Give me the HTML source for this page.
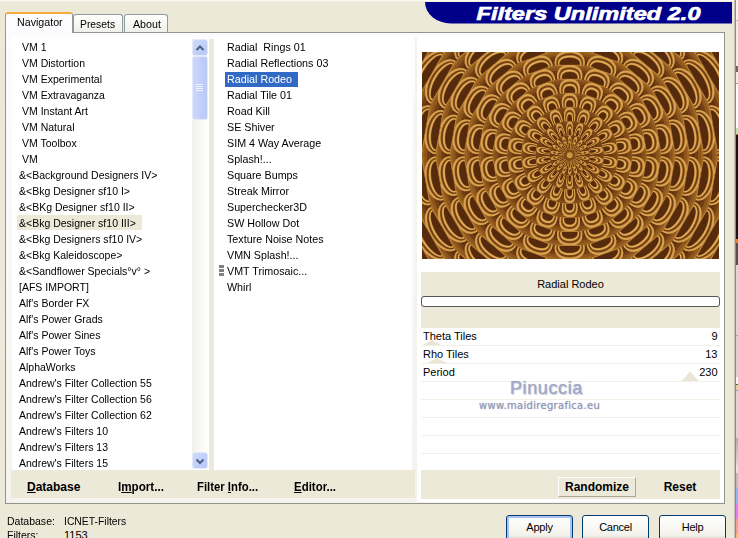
<!DOCTYPE html>
<html><head><meta charset="utf-8"><title>Filters Unlimited 2.0</title>
<style>
html,body{margin:0;padding:0;}
body{width:738px;height:538px;overflow:hidden;background:#ECE9D8;position:relative;font-family:"Liberation Sans",sans-serif;font-size:11px;color:#000;}
.a{position:absolute;}
.t{position:absolute;white-space:nowrap;line-height:14px;height:14px;}
.l{transform:scaleX(0.955);transform-origin:0 0;}
.m{transform:scaleX(0.975);transform-origin:0 0;}
.b{font-weight:bold;font-size:12px;}
.btn{position:absolute;box-sizing:border-box;border:1px solid #003C74;border-radius:3px;background:linear-gradient(#fff,#F3F2EA 80%,#D8D4C4);height:26px;text-align:center;line-height:22px;font-size:11px;letter-spacing:-0.25px;}
u{text-decoration:underline;}
</style></head><body>

<div class="a" style="left:0;top:0;width:738px;height:1px;background:#FAF9F2"></div><div class="a" style="left:0;top:1px;width:738px;height:1px;background:#F1EEE0"></div>
<svg class="a" style="left:420px;top:0px" width="312" height="26" viewBox="420 0 312 26"><path d="M425,2 A26,21.5 0 0 0 451,23.5 H732 V2 Z" fill="#00008B"/><text x="588.5" y="19.5" text-anchor="middle" font-family="Liberation Sans, sans-serif" font-weight="bold" font-style="italic" font-size="19" fill="#fff" stroke="#fff" stroke-width="0.7" textLength="224" lengthAdjust="spacingAndGlyphs">Filters Unlimited 2.0</text></svg>
<div class="a" style="left:5px;top:32px;width:720px;height:472px;box-sizing:border-box;border:1px solid #94948E;background:linear-gradient(#FCFCFE,#F4F3EE)"></div>
<div class="a" style="left:72.5px;top:14px;width:50px;height:18px;box-sizing:border-box;border:1px solid #919B9C;border-bottom:none;border-radius:3px 3px 0 0;background:linear-gradient(#fff,#F0F0EA)"></div>
<div class="a" style="left:124px;top:14px;width:44px;height:18px;box-sizing:border-box;border:1px solid #919B9C;border-bottom:none;border-radius:3px 3px 0 0;background:linear-gradient(#fff,#F0F0EA)"></div>
<div class="a" style="left:5px;top:12px;width:68px;height:21px;box-sizing:border-box;border:1px solid #919B9C;border-bottom:none;border-top:2px solid #F2AD3C;border-radius:3px 3px 0 0;background:#FCFCFE"></div>
<div class="t" style="left:16.5px;top:15px;font-size:11px;transform:scaleX(0.97);transform-origin:0 0">Navigator</div>
<div class="t" style="left:80px;top:17px;font-size:11px;transform:scaleX(0.94);transform-origin:0 0">Presets</div>
<div class="t" style="left:132.5px;top:17px;font-size:11px;transform:scaleX(0.97);transform-origin:0 0">About</div>
<div class="a" style="left:12px;top:37px;width:197px;height:433px;background:#fff"></div>
<div class="a" style="left:209px;top:39px;width:5px;height:431px;background:#ECE9D8"></div>
<div class="a" style="left:214px;top:37px;width:198px;height:433px;background:#fff"></div>
<div class="a" style="left:17px;top:215px;width:125px;height:15px;background:#ECE9D8"></div>
<div class="a" style="left:225px;top:71.5px;width:73px;height:15px;background:#316AC5"></div>
<div class="t l" style="left:22px;top:39.5px">VM 1</div>
<div class="t l" style="left:22px;top:55.5px">VM Distortion</div>
<div class="t l" style="left:22px;top:71.5px">VM Experimental</div>
<div class="t l" style="left:22px;top:87.5px">VM Extravaganza</div>
<div class="t l" style="left:22px;top:103.5px">VM Instant Art</div>
<div class="t l" style="left:22px;top:119.5px">VM Natural</div>
<div class="t l" style="left:22px;top:135.5px">VM Toolbox</div>
<div class="t l" style="left:22px;top:151.5px">VM</div>
<div class="t l" style="left:19px;top:167.5px">&amp;&lt;Background Designers IV&gt;</div>
<div class="t l" style="left:19px;top:183.5px">&amp;&lt;Bkg Designer sf10 I&gt;</div>
<div class="t l" style="left:19px;top:199.5px">&amp;&lt;BKg Designer sf10 II&gt;</div>
<div class="t l" style="left:19px;top:215.5px">&amp;&lt;Bkg Designer sf10 III&gt;</div>
<div class="t l" style="left:19px;top:231.5px">&amp;&lt;Bkg Designers sf10 IV&gt;</div>
<div class="t l" style="left:19px;top:247.5px">&amp;&lt;Bkg Kaleidoscope&gt;</div>
<div class="t l" style="left:19px;top:263.5px">&amp;&lt;Sandflower Specials°v° &gt;</div>
<div class="t l" style="left:19px;top:279.5px">[AFS IMPORT]</div>
<div class="t l" style="left:19px;top:295.5px">Alf's Border FX</div>
<div class="t l" style="left:19px;top:311.5px">Alf's Power Grads</div>
<div class="t l" style="left:19px;top:327.5px">Alf's Power Sines</div>
<div class="t l" style="left:19px;top:343.5px">Alf's Power Toys</div>
<div class="t l" style="left:19px;top:359.5px">AlphaWorks</div>
<div class="t l" style="left:19px;top:375.5px">Andrew's Filter Collection 55</div>
<div class="t l" style="left:19px;top:391.5px">Andrew's Filter Collection 56</div>
<div class="t l" style="left:19px;top:407.5px">Andrew's Filter Collection 62</div>
<div class="t l" style="left:19px;top:423.5px">Andrew's Filters 10</div>
<div class="t l" style="left:19px;top:439.5px">Andrew's Filters 13</div>
<div class="t l" style="left:19px;top:455.5px">Andrew's Filters 15</div>
<div class="t m" style="left:227px;top:39.5px">Radial&nbsp; Rings 01</div>
<div class="t m" style="left:227px;top:55.5px">Radial Reflections 03</div>
<div class="t m" style="left:227px;top:71.5px;color:#fff">Radial Rodeo</div>
<div class="t m" style="left:227px;top:87.5px">Radial Tile 01</div>
<div class="t m" style="left:227px;top:103.5px">Road Kill</div>
<div class="t m" style="left:227px;top:119.5px">SE Shiver</div>
<div class="t m" style="left:227px;top:135.5px">SIM 4 Way Average</div>
<div class="t m" style="left:227px;top:151.5px">Splash!...</div>
<div class="t m" style="left:227px;top:167.5px">Square Bumps</div>
<div class="t m" style="left:227px;top:183.5px">Streak Mirror</div>
<div class="t m" style="left:227px;top:199.5px">Superchecker3D</div>
<div class="t m" style="left:227px;top:215.5px">SW Hollow Dot</div>
<div class="t m" style="left:227px;top:231.5px">Texture Noise Notes</div>
<div class="t m" style="left:227px;top:247.5px">VMN Splash!...</div>
<div class="t m" style="left:227px;top:263.5px">VMT Trimosaic...</div>
<div class="t m" style="left:227px;top:279.5px">Whirl</div>
<div class="a" style="left:219px;top:265px;width:5px;height:3px;background:#808080"></div><div class="a" style="left:219px;top:269px;width:5px;height:3px;background:#808080"></div><div class="a" style="left:219px;top:273px;width:5px;height:3px;background:#808080"></div>
<div class="a" style="left:192px;top:39px;width:16px;height:430px;background:linear-gradient(90deg,#F3F1EC,#FEFEFB)"></div>
<div class="a" style="left:192px;top:39px;width:16px;height:17px;box-sizing:border-box;border:1px solid #E4EAFD;border-radius:3px;background:linear-gradient(135deg,#CFDBFD,#B6C6F5)"></div>
<div class="a" style="left:192px;top:452px;width:16px;height:17px;box-sizing:border-box;border:1px solid #E4EAFD;border-radius:3px;background:linear-gradient(135deg,#CFDBFD,#B6C6F5)"></div>
<div class="a" style="left:192px;top:56px;width:16px;height:64px;box-sizing:border-box;border:1px solid #E4EAFD;border-radius:3px;background:linear-gradient(90deg,#CBD8FC,#B9C8F6)"></div>
<svg class="a" style="left:192px;top:39.5px" width="16" height="16"><path d="M4.5,10 L8,6.5 L11.5,10" fill="none" stroke="#4D6185" stroke-width="2"/></svg>
<svg class="a" style="left:192px;top:452.5px" width="16" height="16"><path d="M4.5,6.5 L8,10 L11.5,6.5" fill="none" stroke="#4D6185" stroke-width="2"/></svg>
<div class="a" style="left:196px;top:84px;width:7px;height:1px;background:#EEF4FE"></div><div class="a" style="left:196px;top:86px;width:7px;height:1px;background:#EEF4FE"></div><div class="a" style="left:196px;top:88px;width:7px;height:1px;background:#EEF4FE"></div><div class="a" style="left:196px;top:90px;width:7px;height:1px;background:#EEF4FE"></div>
<div class="a" style="left:11px;top:470px;width:404px;height:28px;background:#ECE9D8"></div>
<div class="t b" style="left:27px;top:480px"><u>D</u>atabase</div>
<div class="t b" style="left:117.5px;top:480px;transform:scaleX(0.97);transform-origin:0 0">I<u>m</u>port...</div>
<div class="t b" style="left:196.5px;top:480px;transform:scaleX(0.945);transform-origin:0 0">Filter <u>I</u>nfo...</div>
<div class="t b" style="left:293.5px;top:480px;transform:scaleX(0.955);transform-origin:0 0"><u>E</u>ditor...</div>
<div class="a" style="left:416px;top:37px;width:308px;height:465px;background:#fff"></div>
<div class="a" style="left:415px;top:37px;width:2px;height:465px;background:#F3F2EC"></div>
<div class="a" style="left:421px;top:272px;width:299px;height:227px;background:#ECE9D8"></div>
<svg class="a" style="left:422px;top:52px" width="297" height="207" viewBox="0 0 297 207"><defs><filter id="bl" x="0" y="0" width="1" height="1"><feGaussianBlur stdDeviation="0.45"/></filter><g id="w"><path fill="#582B0D" d="M6.0,-0.0L6.0,-0.3L6.0,-0.7L5.9,-1.0L5.8,-1.4L5.7,-1.7L5.6,-2.1L11.3,-4.1L11.5,-3.4L11.7,-2.8L11.8,-2.1L11.9,-1.4L12.0,-0.7L12.0,-0.0Z"/><path fill="#5F300F" d="M11.7,-0.0L11.7,-0.7L11.6,-1.4L11.5,-2.0L11.4,-2.7L11.2,-3.3L11.0,-4.0L14.2,-5.2L14.5,-4.3L14.7,-3.5L14.9,-2.6L15.0,-1.8L15.1,-0.9L15.1,-0.0Z"/><path fill="#693811" d="M14.8,-0.0L14.8,-0.9L14.7,-1.7L14.6,-2.6L14.4,-3.4L14.2,-4.2L13.9,-5.1L16.9,-6.1L17.2,-5.1L17.5,-4.1L17.7,-3.1L17.8,-2.1L17.9,-1.0L17.9,-0.0Z"/><path fill="#6F3E14" d="M17.6,-0.0L17.6,-1.0L17.5,-2.0L17.4,-3.1L17.2,-4.1L16.9,-5.1L16.6,-6.0L19.3,-7.0L19.6,-5.9L19.9,-4.7L20.2,-3.6L20.4,-2.4L20.5,-1.2L20.5,-0.0Z"/><path fill="#CD9644" d="M5.7,-1.8L9.2,-2.9L11.7,-3.6L13.8,-4.1L15.6,-4.4L17.1,-4.5L18.1,-4.3L18.9,-4.0L19.2,-3.4L19.1,-2.7L18.5,-2.1L17.6,-1.6L16.2,-1.2L14.4,-0.9L12.2,-0.6L9.6,-0.4L6.0,-0.3Z"/><path fill="#D9A553" d="M5.7,-1.8L9.1,-2.8L11.5,-3.5L13.6,-3.9L15.3,-4.2L16.7,-4.3L17.7,-4.2L18.4,-3.9L18.7,-3.3L18.6,-2.6L18.1,-2.1L17.1,-1.7L15.8,-1.3L14.1,-0.9L12.0,-0.7L9.5,-0.5L6.0,-0.3Z"/><path fill="#CD9644" d="M5.8,-1.7L8.8,-2.5L11.0,-3.1L12.8,-3.5L14.3,-3.8L15.6,-3.9L16.5,-3.8L17.1,-3.5L17.4,-3.1L17.3,-2.5L16.8,-2.1L16.0,-1.7L14.8,-1.4L13.2,-1.1L11.4,-0.8L9.1,-0.6L6.0,-0.4Z"/><path fill="#9E6524" d="M5.8,-1.6L8.6,-2.4L10.7,-3.0L12.4,-3.3L13.9,-3.6L15.1,-3.6L15.9,-3.6L16.5,-3.4L16.7,-3.0L16.7,-2.5L16.2,-2.1L15.4,-1.7L14.3,-1.4L12.8,-1.1L11.1,-0.9L9.0,-0.7L6.0,-0.4Z"/><path fill="#703D13" d="M5.8,-1.6L8.5,-2.4L10.5,-2.9L12.2,-3.2L13.6,-3.4L14.7,-3.5L15.5,-3.5L16.1,-3.3L16.3,-2.9L16.2,-2.4L15.8,-2.1L15.0,-1.7L13.9,-1.4L12.6,-1.2L10.9,-0.9L8.8,-0.7L6.0,-0.5Z"/><path fill="#9E6524" d="M5.8,-1.5L8.2,-2.1L9.9,-2.5L11.3,-2.8L12.5,-3.0L13.4,-3.0L14.1,-3.0L14.6,-2.9L14.8,-2.6L14.7,-2.3L14.3,-2.0L13.7,-1.7L12.7,-1.5L11.6,-1.3L10.1,-1.0L8.4,-0.8L6.0,-0.6Z"/><path fill="#CD9644" d="M5.8,-1.5L8.1,-2.0L9.7,-2.4L11.1,-2.7L12.2,-2.9L13.1,-2.9L13.8,-2.9L14.3,-2.8L14.4,-2.5L14.4,-2.2L14.0,-2.0L13.4,-1.7L12.5,-1.5L11.3,-1.3L10.0,-1.1L8.3,-0.9L6.0,-0.6Z"/><path fill="#E2B260" d="M5.8,-1.4L8.0,-2.0L9.5,-2.3L10.8,-2.6L11.9,-2.7L12.8,-2.8L13.4,-2.8L13.8,-2.7L14.0,-2.5L13.9,-2.2L13.6,-2.0L13.0,-1.7L12.1,-1.5L11.1,-1.3L9.8,-1.1L8.2,-0.9L6.0,-0.6Z"/><path fill="#CD9644" d="M5.8,-1.4L7.7,-1.8L9.1,-2.1L10.2,-2.3L11.1,-2.4L11.9,-2.5L12.4,-2.5L12.8,-2.4L12.9,-2.3L12.8,-2.1L12.5,-1.9L12.0,-1.7L11.3,-1.5L10.4,-1.3L9.2,-1.1L7.9,-1.0L6.0,-0.7Z"/><path fill="#965C1E" d="M5.9,-1.3L7.6,-1.7L8.8,-2.0L9.9,-2.2L10.8,-2.3L11.5,-2.4L12.0,-2.4L12.3,-2.3L12.4,-2.2L12.3,-2.0L12.1,-1.9L11.6,-1.7L10.9,-1.5L10.0,-1.3L9.0,-1.2L7.7,-1.0L6.0,-0.8Z"/><path fill="#56290C" d="M5.9,-1.3L7.5,-1.7L8.7,-1.9L9.7,-2.1L10.5,-2.2L11.2,-2.3L11.6,-2.3L11.9,-2.3L12.1,-2.1L12.0,-2.0L11.7,-1.8L11.3,-1.7L10.6,-1.5L9.8,-1.4L8.8,-1.2L7.6,-1.0L5.9,-0.8Z"/><path fill="#592B0D" d="M20.2,-0.0L20.2,-1.2L20.1,-2.3L19.9,-3.5L19.7,-4.7L19.4,-5.8L19.0,-6.9L24.6,-9.0L25.1,-7.5L25.5,-6.0L25.8,-4.5L26.0,-3.0L26.1,-1.5L26.2,-0.0Z"/><path fill="#62320F" d="M25.9,-0.0L25.8,-1.5L25.7,-3.0L25.5,-4.5L25.2,-6.0L24.8,-7.4L24.3,-8.9L27.5,-10.0L28.1,-8.4L28.5,-6.8L28.9,-5.1L29.1,-3.4L29.3,-1.7L29.3,-0.0Z"/><path fill="#6F3D13" d="M29.0,-0.0L29.0,-1.7L28.8,-3.4L28.6,-5.0L28.2,-6.7L27.8,-8.3L27.3,-9.9L30.2,-11.0L30.8,-9.2L31.3,-7.4L31.7,-5.6L31.9,-3.7L32.1,-1.9L32.1,-0.0Z"/><path fill="#774417" d="M31.8,-0.0L31.8,-1.9L31.6,-3.7L31.4,-5.5L31.0,-7.3L30.5,-9.1L29.9,-10.9L32.6,-11.9L33.2,-10.0L33.8,-8.0L34.2,-6.0L34.5,-4.0L34.6,-2.0L34.7,-0.0Z"/><path fill="#CD9644" d="M19.2,-6.2L22.7,-7.3L25.2,-7.9L27.4,-8.3L29.2,-8.4L30.8,-8.2L31.9,-7.8L32.7,-7.0L33.2,-5.9L33.2,-4.6L32.7,-3.6L31.7,-2.8L30.3,-2.1L28.6,-1.6L26.4,-1.2L23.8,-0.9L20.2,-0.7Z"/><path fill="#D9A553" d="M19.3,-6.1L22.6,-7.1L25.1,-7.7L27.1,-8.1L28.9,-8.1L30.4,-8.0L31.5,-7.6L32.3,-6.9L32.7,-5.8L32.7,-4.6L32.2,-3.7L31.3,-2.9L30.0,-2.2L28.3,-1.7L26.2,-1.3L23.7,-1.1L20.2,-0.9Z"/><path fill="#CD9644" d="M19.4,-5.8L22.4,-6.6L24.6,-7.2L26.4,-7.4L28.0,-7.5L29.3,-7.4L30.3,-7.0L31.0,-6.5L31.4,-5.5L31.3,-4.5L30.9,-3.8L30.1,-3.1L28.9,-2.5L27.4,-2.1L25.5,-1.7L23.3,-1.4L20.2,-1.2Z"/><path fill="#9E6524" d="M19.4,-5.6L22.3,-6.4L24.3,-6.9L26.1,-7.2L27.6,-7.2L28.8,-7.1L29.8,-6.8L30.4,-6.3L30.7,-5.4L30.7,-4.5L30.3,-3.8L29.5,-3.2L28.4,-2.6L27.0,-2.2L25.2,-1.9L23.1,-1.6L20.2,-1.3Z"/><path fill="#703D13" d="M19.4,-5.5L22.2,-6.3L24.2,-6.7L25.9,-7.0L27.3,-7.0L28.5,-6.9L29.4,-6.6L30.0,-6.2L30.3,-5.3L30.3,-4.5L29.9,-3.8L29.1,-3.2L28.1,-2.7L26.7,-2.3L25.0,-2.0L23.0,-1.7L20.1,-1.4Z"/><path fill="#9E6524" d="M19.5,-5.2L21.9,-5.8L23.6,-6.1L25.1,-6.3L26.3,-6.4L27.3,-6.3L28.0,-6.1L28.5,-5.7L28.8,-5.1L28.7,-4.4L28.4,-3.9L27.8,-3.4L26.9,-3.0L25.7,-2.6L24.3,-2.3L22.5,-2.1L20.1,-1.8Z"/><path fill="#CD9644" d="M19.6,-5.1L21.8,-5.6L23.5,-6.0L24.9,-6.2L26.0,-6.2L27.0,-6.2L27.7,-5.9L28.2,-5.6L28.4,-5.0L28.4,-4.4L28.1,-3.9L27.5,-3.4L26.6,-3.0L25.5,-2.7L24.1,-2.4L22.4,-2.2L20.1,-1.9Z"/><path fill="#E2B260" d="M19.6,-5.0L21.7,-5.5L23.3,-5.8L24.6,-6.0L25.7,-6.1L26.6,-6.0L27.3,-5.8L27.8,-5.5L28.0,-4.9L28.0,-4.4L27.7,-3.9L27.1,-3.5L26.3,-3.1L25.2,-2.8L23.9,-2.5L22.3,-2.3L20.1,-2.0Z"/><path fill="#CD9644" d="M19.6,-4.7L21.5,-5.1L22.9,-5.4L24.0,-5.5L25.0,-5.6L25.7,-5.6L26.3,-5.4L26.7,-5.2L26.9,-4.7L26.9,-4.3L26.6,-3.9L26.1,-3.6L25.4,-3.3L24.5,-3.0L23.3,-2.8L22.0,-2.5L20.1,-2.3Z"/><path fill="#965C1E" d="M19.7,-4.6L21.4,-5.0L22.7,-5.2L23.7,-5.4L24.6,-5.4L25.3,-5.4L25.9,-5.2L26.2,-5.0L26.4,-4.7L26.4,-4.2L26.1,-3.9L25.6,-3.6L25.0,-3.3L24.1,-3.1L23.1,-2.9L21.8,-2.6L20.1,-2.4Z"/><path fill="#56290C" d="M19.7,-4.5L21.3,-4.9L22.5,-5.1L23.5,-5.2L24.4,-5.3L25.0,-5.2L25.6,-5.1L25.9,-4.9L26.0,-4.6L26.0,-4.2L25.8,-3.9L25.3,-3.6L24.7,-3.4L23.9,-3.1L22.9,-2.9L21.7,-2.7L20.0,-2.5Z"/><path fill="#5A2C0D" d="M34.4,-0.0L34.3,-2.0L34.2,-4.0L33.9,-6.0L33.5,-7.9L33.0,-9.9L32.3,-11.8L37.9,-13.8L38.7,-11.6L39.3,-9.3L39.8,-7.0L40.1,-4.7L40.3,-2.3L40.4,-0.0Z"/><path fill="#653510" d="M40.1,-0.0L40.0,-2.3L39.8,-4.7L39.5,-7.0L39.0,-9.2L38.4,-11.5L37.7,-13.7L40.9,-14.9L41.7,-12.5L42.3,-10.0L42.8,-7.6L43.2,-5.1L43.4,-2.5L43.5,-0.0Z"/><path fill="#754215" d="M43.2,-0.0L43.1,-2.5L42.9,-5.0L42.5,-7.5L42.0,-10.0L41.4,-12.4L40.6,-14.8L43.5,-15.9L44.4,-13.3L45.1,-10.7L45.6,-8.0L46.0,-5.4L46.3,-2.7L46.3,-0.0Z"/><path fill="#7F4B19" d="M46.0,-0.0L46.0,-2.7L45.7,-5.3L45.3,-8.0L44.8,-10.6L44.1,-13.2L43.3,-15.7L46.0,-16.7L46.8,-14.0L47.6,-11.3L48.2,-8.5L48.6,-5.7L48.8,-2.8L48.9,-0.0Z"/><path fill="#CD9644" d="M32.6,-11.0L36.1,-12.1L38.6,-12.6L40.9,-12.8L42.8,-12.7L44.4,-12.2L45.7,-11.4L46.6,-10.2L47.2,-8.3L47.3,-6.4L46.8,-4.9L45.9,-3.7L44.5,-2.7L42.8,-1.9L40.6,-1.4L38.0,-1.0L34.4,-0.8Z"/><path fill="#D9A553" d="M32.7,-10.8L36.0,-11.8L38.5,-12.3L40.6,-12.5L42.5,-12.4L44.0,-11.9L45.2,-11.1L46.1,-10.0L46.7,-8.2L46.8,-6.4L46.3,-5.0L45.4,-3.8L44.2,-2.9L42.5,-2.1L40.4,-1.6L37.9,-1.2L34.4,-1.0Z"/><path fill="#CD9644" d="M32.8,-10.3L35.9,-11.1L38.1,-11.6L40.0,-11.7L41.6,-11.6L43.0,-11.2L44.1,-10.5L44.9,-9.5L45.3,-8.0L45.4,-6.4L45.0,-5.2L44.2,-4.2L43.1,-3.3L41.6,-2.7L39.7,-2.2L37.5,-1.8L34.4,-1.6Z"/><path fill="#9E6524" d="M32.9,-10.0L35.8,-10.8L37.9,-11.2L39.7,-11.3L41.2,-11.2L42.5,-10.9L43.5,-10.2L44.3,-9.3L44.7,-7.9L44.8,-6.4L44.4,-5.3L43.7,-4.3L42.6,-3.6L41.2,-2.9L39.4,-2.4L37.3,-2.1L34.3,-1.9Z"/><path fill="#703D13" d="M33.0,-9.8L35.7,-10.6L37.7,-11.0L39.5,-11.1L41.0,-11.0L42.2,-10.6L43.2,-10.0L43.9,-9.2L44.3,-7.8L44.4,-6.4L44.0,-5.4L43.3,-4.5L42.3,-3.7L40.9,-3.1L39.2,-2.6L37.2,-2.3L34.3,-2.0Z"/><path fill="#9E6524" d="M33.1,-9.2L35.5,-9.8L37.2,-10.1L38.7,-10.2L40.0,-10.1L41.0,-9.8L41.8,-9.3L42.4,-8.6L42.8,-7.5L42.8,-6.4L42.5,-5.5L41.9,-4.8L41.0,-4.2L39.9,-3.6L38.4,-3.2L36.7,-2.9L34.3,-2.7Z"/><path fill="#CD9644" d="M33.2,-9.1L35.5,-9.6L37.1,-9.9L38.5,-10.0L39.7,-9.9L40.7,-9.6L41.5,-9.2L42.1,-8.5L42.4,-7.5L42.4,-6.4L42.2,-5.6L41.6,-4.9L40.7,-4.3L39.6,-3.8L38.3,-3.4L36.6,-3.1L34.3,-2.8Z"/><path fill="#E2B260" d="M33.2,-8.9L35.4,-9.4L37.0,-9.7L38.3,-9.8L39.5,-9.7L40.4,-9.4L41.2,-9.0L41.7,-8.4L42.0,-7.4L42.0,-6.4L41.8,-5.6L41.2,-5.0L40.4,-4.4L39.4,-3.9L38.1,-3.5L36.5,-3.2L34.3,-3.0Z"/><path fill="#CD9644" d="M33.3,-8.4L35.2,-8.9L36.6,-9.1L37.7,-9.2L38.7,-9.1L39.5,-8.9L40.2,-8.5L40.6,-8.0L40.9,-7.2L40.9,-6.4L40.7,-5.7L40.2,-5.2L39.5,-4.7L38.6,-4.3L37.5,-4.0L36.1,-3.7L34.2,-3.5Z"/><path fill="#965C1E" d="M33.4,-8.2L35.1,-8.6L36.4,-8.8L37.5,-8.9L38.4,-8.8L39.2,-8.6L39.7,-8.3L40.1,-7.8L40.4,-7.1L40.4,-6.4L40.2,-5.8L39.7,-5.3L39.1,-4.9L38.3,-4.5L37.2,-4.2L36.0,-3.9L34.2,-3.7Z"/><path fill="#56290C" d="M33.4,-8.1L35.1,-8.5L36.3,-8.6L37.3,-8.7L38.2,-8.6L38.9,-8.5L39.4,-8.2L39.8,-7.7L40.0,-7.1L40.1,-6.4L39.8,-5.8L39.4,-5.4L38.8,-4.9L38.0,-4.6L37.1,-4.3L35.9,-4.0L34.2,-3.8Z"/><path fill="#5A2C0D" d="M48.6,-0.0L48.5,-2.8L48.3,-5.6L47.9,-8.4L47.3,-11.2L46.6,-13.9L45.7,-16.6L51.3,-18.7L52.3,-15.7L53.1,-12.6L53.8,-9.5L54.2,-6.3L54.5,-3.2L54.6,-0.0Z"/><path fill="#673711" d="M54.3,-0.0L54.2,-3.2L53.9,-6.3L53.5,-9.4L52.8,-12.5L52.0,-15.6L51.0,-18.6L54.2,-19.7L55.3,-16.5L56.1,-13.3L56.8,-10.0L57.3,-6.7L57.6,-3.4L57.7,-0.0Z"/><path fill="#7B4616" d="M57.4,-0.0L57.3,-3.3L57.0,-6.7L56.5,-10.0L55.9,-13.2L55.0,-16.5L53.9,-19.6L56.9,-20.7L58.0,-17.4L58.9,-14.0L59.6,-10.5L60.1,-7.0L60.4,-3.5L60.5,-0.0Z"/><path fill="#87511C" d="M60.2,-0.0L60.1,-3.5L59.8,-7.0L59.3,-10.5L58.6,-13.9L57.7,-17.3L56.6,-20.6L59.3,-21.6L60.4,-18.1L61.4,-14.6L62.1,-11.0L62.7,-7.3L63.0,-3.7L63.1,-0.0Z"/><path fill="#CD9644" d="M46.0,-15.8L49.5,-16.9L52.0,-17.3L54.3,-17.4L56.3,-17.0L58.0,-16.2L59.4,-15.0L60.4,-13.3L61.1,-10.8L61.3,-8.2L60.9,-6.2L60.1,-4.6L58.7,-3.3L57.0,-2.2L54.8,-1.5L52.2,-1.1L48.6,-0.9Z"/><path fill="#D9A553" d="M46.1,-15.5L49.4,-16.5L51.9,-17.0L54.1,-17.0L56.0,-16.6L57.7,-15.9L59.0,-14.7L60.0,-13.1L60.7,-10.7L60.8,-8.2L60.5,-6.4L59.6,-4.8L58.3,-3.5L56.7,-2.5L54.6,-1.8L52.1,-1.4L48.6,-1.2Z"/><path fill="#CD9644" d="M46.3,-14.8L49.3,-15.6L51.6,-16.0L53.5,-16.0L55.2,-15.7L56.7,-15.0L57.9,-14.0L58.7,-12.6L59.3,-10.5L59.5,-8.3L59.2,-6.7L58.4,-5.3L57.3,-4.2L55.8,-3.3L53.9,-2.6L51.7,-2.2L48.6,-2.0Z"/><path fill="#9E6524" d="M46.4,-14.4L49.3,-15.2L51.4,-15.5L53.3,-15.5L54.9,-15.2L56.2,-14.6L57.3,-13.6L58.1,-12.3L58.7,-10.4L58.9,-8.3L58.5,-6.8L57.8,-5.5L56.8,-4.5L55.4,-3.6L53.6,-3.0L51.5,-2.6L48.5,-2.3Z"/><path fill="#703D13" d="M46.5,-14.2L49.3,-14.9L51.3,-15.2L53.1,-15.2L54.6,-14.9L55.9,-14.3L57.0,-13.4L57.8,-12.2L58.3,-10.3L58.4,-8.3L58.1,-6.9L57.4,-5.7L56.4,-4.7L55.1,-3.8L53.4,-3.2L51.4,-2.8L48.5,-2.6Z"/><path fill="#9E6524" d="M46.7,-13.3L49.1,-13.9L50.9,-14.1L52.4,-14.1L53.7,-13.8L54.8,-13.3L55.7,-12.6L56.3,-11.5L56.7,-10.0L56.9,-8.4L56.6,-7.2L56.0,-6.2L55.2,-5.4L54.0,-4.7L52.6,-4.1L50.9,-3.7L48.5,-3.5Z"/><path fill="#CD9644" d="M46.8,-13.1L49.1,-13.7L50.8,-13.9L52.2,-13.9L53.5,-13.6L54.5,-13.1L55.4,-12.4L56.0,-11.4L56.4,-9.9L56.5,-8.4L56.3,-7.3L55.7,-6.3L54.9,-5.5L53.8,-4.8L52.4,-4.3L50.8,-4.0L48.5,-3.7Z"/><path fill="#E2B260" d="M46.9,-12.9L49.0,-13.4L50.6,-13.6L52.0,-13.6L53.2,-13.3L54.2,-12.9L55.0,-12.2L55.6,-11.3L56.0,-9.9L56.1,-8.4L55.8,-7.4L55.3,-6.5L54.5,-5.7L53.5,-5.0L52.2,-4.6L50.7,-4.2L48.4,-3.9Z"/><path fill="#CD9644" d="M47.0,-12.2L48.9,-12.6L50.3,-12.8L51.5,-12.8L52.5,-12.6L53.4,-12.2L54.0,-11.6L54.5,-10.8L54.9,-9.7L54.9,-8.5L54.7,-7.6L54.3,-6.8L53.6,-6.2L52.7,-5.6L51.6,-5.2L50.3,-4.9L48.4,-4.6Z"/><path fill="#965C1E" d="M47.1,-11.9L48.9,-12.3L50.1,-12.5L51.2,-12.4L52.2,-12.2L53.0,-11.9L53.6,-11.4L54.1,-10.6L54.4,-9.6L54.4,-8.5L54.3,-7.7L53.8,-7.0L53.2,-6.4L52.4,-5.8L51.4,-5.4L50.1,-5.1L48.4,-4.9Z"/><path fill="#56290C" d="M47.2,-11.7L48.8,-12.1L50.0,-12.2L51.1,-12.2L52.0,-12.0L52.7,-11.7L53.3,-11.2L53.7,-10.5L54.0,-9.5L54.1,-8.5L53.9,-7.7L53.5,-7.1L52.9,-6.5L52.2,-6.0L51.2,-5.6L50.0,-5.3L48.3,-5.1Z"/><path fill="#5B2D0D" d="M62.8,-0.0L62.7,-3.7L62.4,-7.3L61.8,-10.9L61.1,-14.5L60.2,-18.0L59.0,-21.5L64.6,-23.5L65.9,-19.7L66.9,-15.9L67.7,-11.9L68.3,-8.0L68.7,-4.0L68.8,-0.0Z"/><path fill="#6A3912" d="M68.5,-0.0L68.4,-4.0L68.0,-8.0L67.4,-11.9L66.6,-15.8L65.6,-19.6L64.4,-23.4L67.6,-24.6L68.9,-20.6L70.0,-16.6L70.8,-12.5L71.4,-8.3L71.8,-4.2L71.9,-0.0Z"/><path fill="#814B18" d="M71.6,-0.0L71.5,-4.2L71.1,-8.3L70.5,-12.4L69.7,-16.5L68.6,-20.5L67.3,-24.5L70.2,-25.6L71.6,-21.4L72.7,-17.2L73.6,-13.0L74.2,-8.7L74.6,-4.3L74.7,-0.0Z"/><path fill="#8F581F" d="M74.4,-0.0L74.3,-4.3L73.9,-8.6L73.3,-12.9L72.4,-17.2L71.3,-21.4L70.0,-25.5L72.6,-26.4L74.1,-22.2L75.2,-17.8L76.1,-13.4L76.8,-9.0L77.2,-4.5L77.3,-0.0Z"/><path fill="#CD9644" d="M59.3,-20.6L62.7,-21.6L65.3,-22.0L67.7,-21.8L69.8,-21.2L71.6,-20.1L73.1,-18.5L74.3,-16.3L75.1,-13.2L75.4,-10.1L75.1,-7.7L74.2,-5.6L72.8,-3.9L71.1,-2.6L68.9,-1.7L66.3,-1.1L62.8,-0.9Z"/><path fill="#D9A553" d="M59.4,-20.3L62.7,-21.3L65.2,-21.6L67.5,-21.5L69.5,-20.8L71.3,-19.7L72.7,-18.2L73.8,-16.1L74.6,-13.2L74.9,-10.1L74.6,-7.8L73.7,-5.8L72.5,-4.2L70.8,-2.9L68.7,-2.0L66.2,-1.5L62.8,-1.2Z"/><path fill="#CD9644" d="M59.7,-19.5L62.6,-20.3L64.9,-20.5L66.9,-20.4L68.8,-19.8L70.3,-18.8L71.6,-17.4L72.6,-15.6L73.3,-12.9L73.6,-10.2L73.3,-8.1L72.5,-6.4L71.4,-4.9L69.9,-3.7L68.0,-2.9L65.8,-2.4L62.8,-2.1Z"/><path fill="#9E6524" d="M59.8,-19.1L62.6,-19.8L64.8,-20.1L66.7,-19.9L68.4,-19.3L69.9,-18.4L71.1,-17.1L72.0,-15.3L72.7,-12.8L72.9,-10.2L72.6,-8.3L72.0,-6.6L70.9,-5.2L69.5,-4.1L67.7,-3.3L65.6,-2.8L62.7,-2.5Z"/><path fill="#703D13" d="M59.9,-18.8L62.6,-19.5L64.7,-19.7L66.5,-19.6L68.2,-19.0L69.6,-18.1L70.7,-16.8L71.6,-15.1L72.3,-12.7L72.5,-10.3L72.2,-8.4L71.6,-6.8L70.5,-5.4L69.2,-4.4L67.5,-3.6L65.5,-3.1L62.7,-2.8Z"/><path fill="#9E6524" d="M60.2,-17.8L62.5,-18.4L64.3,-18.5L65.9,-18.4L67.2,-17.9L68.5,-17.1L69.4,-16.0L70.2,-14.5L70.7,-12.5L70.9,-10.4L70.7,-8.7L70.2,-7.4L69.3,-6.2L68.2,-5.3L66.7,-4.6L65.0,-4.1L62.7,-3.8Z"/><path fill="#CD9644" d="M60.3,-17.6L62.5,-18.1L64.2,-18.3L65.7,-18.1L67.0,-17.6L68.2,-16.8L69.1,-15.8L69.9,-14.4L70.4,-12.4L70.6,-10.4L70.4,-8.8L69.8,-7.5L69.0,-6.4L67.9,-5.5L66.6,-4.8L64.9,-4.3L62.7,-4.1Z"/><path fill="#E2B260" d="M60.4,-17.3L62.5,-17.8L64.1,-17.9L65.5,-17.8L66.8,-17.3L67.9,-16.6L68.8,-15.5L69.5,-14.2L70.0,-12.3L70.1,-10.4L70.0,-8.9L69.5,-7.6L68.7,-6.6L67.6,-5.7L66.3,-5.0L64.8,-4.6L62.6,-4.3Z"/><path fill="#CD9644" d="M60.6,-16.6L62.4,-17.0L63.8,-17.1L65.0,-16.9L66.1,-16.5L67.1,-15.8L67.8,-14.9L68.4,-13.8L68.8,-12.1L69.0,-10.4L68.8,-9.2L68.4,-8.0L67.8,-7.1L66.9,-6.3L65.8,-5.7L64.4,-5.3L62.6,-5.1Z"/><path fill="#965C1E" d="M60.6,-16.3L62.3,-16.7L63.6,-16.7L64.8,-16.6L65.8,-16.2L66.7,-15.5L67.4,-14.7L68.0,-13.6L68.3,-12.1L68.5,-10.5L68.4,-9.3L68.0,-8.2L67.4,-7.3L66.5,-6.6L65.5,-6.0L64.3,-5.7L62.6,-5.4Z"/><path fill="#56290C" d="M60.7,-16.1L62.3,-16.4L63.5,-16.5L64.6,-16.3L65.6,-15.9L66.4,-15.3L67.1,-14.5L67.6,-13.5L68.0,-12.0L68.1,-10.5L68.0,-9.3L67.7,-8.3L67.1,-7.5L66.3,-6.8L65.3,-6.3L64.2,-5.9L62.5,-5.7Z"/><path fill="#5C2E0E" d="M77.0,-0.0L76.9,-4.5L76.5,-8.9L75.8,-13.4L74.9,-17.8L73.8,-22.1L72.4,-26.3L78.0,-28.4L79.5,-23.8L80.7,-19.1L81.7,-14.4L82.4,-9.6L82.8,-4.8L83.0,-0.0Z"/><path fill="#6D3B12" d="M82.7,-0.0L82.5,-4.8L82.1,-9.6L81.4,-14.4L80.5,-19.1L79.2,-23.7L77.7,-28.3L80.9,-29.4L82.5,-24.7L83.8,-19.9L84.8,-15.0L85.5,-10.0L86.0,-5.0L86.1,-0.0Z"/><path fill="#87501A" d="M85.8,-0.0L85.7,-5.0L85.2,-10.0L84.5,-14.9L83.5,-19.8L82.2,-24.6L80.6,-29.3L83.6,-30.4L85.2,-25.5L86.5,-20.5L87.6,-15.4L88.3,-10.3L88.8,-5.2L88.9,-0.0Z"/><path fill="#965E21" d="M88.6,-0.0L88.5,-5.2L88.0,-10.3L87.3,-15.4L86.3,-20.4L84.9,-25.4L83.3,-30.3L86.0,-31.3L87.7,-26.2L89.0,-21.1L90.1,-15.9L90.9,-10.6L91.3,-5.3L91.5,-0.0Z"/><path fill="#CD9644" d="M72.7,-25.5L75.9,-26.4L78.6,-26.6L81.0,-26.3L83.3,-25.4L85.2,-23.9L86.9,-21.9L88.2,-19.3L89.1,-15.7L89.5,-12.0L89.1,-9.2L88.3,-6.7L86.9,-4.6L85.1,-3.0L83.0,-1.9L80.4,-1.2L77.0,-0.9Z"/><path fill="#D9A553" d="M72.8,-25.2L75.9,-26.0L78.5,-26.2L80.9,-25.9L83.0,-25.0L84.9,-23.6L86.5,-21.6L87.7,-19.1L88.6,-15.6L89.0,-12.1L88.7,-9.3L87.8,-6.9L86.5,-4.9L84.8,-3.3L82.7,-2.2L80.2,-1.5L77.0,-1.2Z"/><path fill="#CD9644" d="M73.1,-24.3L75.9,-25.0L78.2,-25.2L80.3,-24.8L82.3,-24.0L84.0,-22.7L85.4,-20.8L86.5,-18.5L87.3,-15.4L87.6,-12.2L87.4,-9.6L86.6,-7.4L85.5,-5.6L84.0,-4.1L82.1,-3.1L79.9,-2.4L77.0,-2.2Z"/><path fill="#9E6524" d="M73.2,-23.9L75.9,-24.6L78.1,-24.7L80.1,-24.3L81.9,-23.5L83.5,-22.2L84.9,-20.5L85.9,-18.3L86.7,-15.3L87.0,-12.2L86.7,-9.8L86.1,-7.7L85.0,-5.9L83.6,-4.5L81.8,-3.5L79.7,-2.9L77.0,-2.6Z"/><path fill="#703D13" d="M73.3,-23.6L75.9,-24.3L78.0,-24.4L79.9,-24.0L81.7,-23.2L83.2,-22.0L84.5,-20.3L85.5,-18.1L86.2,-15.2L86.5,-12.2L86.3,-9.9L85.7,-7.8L84.7,-6.1L83.3,-4.8L81.6,-3.8L79.6,-3.1L76.9,-2.9Z"/><path fill="#9E6524" d="M73.6,-22.6L75.8,-23.1L77.6,-23.2L79.3,-22.8L80.8,-22.1L82.1,-20.9L83.2,-19.4L84.1,-17.5L84.7,-14.9L85.0,-12.3L84.8,-10.2L84.3,-8.4L83.4,-6.9L82.3,-5.7L80.9,-4.8L79.1,-4.2L76.9,-3.9Z"/><path fill="#CD9644" d="M73.7,-22.4L75.8,-22.9L77.5,-22.9L79.1,-22.6L80.6,-21.8L81.8,-20.7L82.9,-19.2L83.7,-17.4L84.4,-14.9L84.6,-12.3L84.5,-10.3L84.0,-8.5L83.2,-7.1L82.1,-5.9L80.7,-5.0L79.0,-4.4L76.9,-4.1Z"/><path fill="#E2B260" d="M73.8,-22.1L75.8,-22.6L77.4,-22.6L78.9,-22.2L80.3,-21.5L81.5,-20.4L82.5,-19.0L83.3,-17.2L83.9,-14.8L84.2,-12.3L84.1,-10.4L83.6,-8.7L82.8,-7.3L81.8,-6.1L80.5,-5.3L78.9,-4.7L76.9,-4.4Z"/><path fill="#CD9644" d="M74.0,-21.4L75.7,-21.8L77.1,-21.7L78.5,-21.4L79.6,-20.7L80.7,-19.7L81.6,-18.4L82.3,-16.8L82.8,-14.6L83.1,-12.4L83.0,-10.6L82.6,-9.1L81.9,-7.8L81.0,-6.7L79.9,-6.0L78.6,-5.5L76.8,-5.2Z"/><path fill="#965C1E" d="M74.1,-21.1L75.7,-21.4L77.0,-21.4L78.2,-21.0L79.4,-20.4L80.3,-19.4L81.2,-18.2L81.8,-16.6L82.3,-14.5L82.6,-12.4L82.5,-10.7L82.1,-9.2L81.5,-8.0L80.7,-7.0L79.7,-6.3L78.4,-5.8L76.8,-5.5Z"/><path fill="#56290C" d="M74.1,-20.8L75.7,-21.1L76.9,-21.1L78.1,-20.8L79.1,-20.1L80.1,-19.2L80.9,-18.0L81.5,-16.5L82.0,-14.5L82.2,-12.4L82.1,-10.8L81.8,-9.4L81.2,-8.2L80.5,-7.2L79.5,-6.5L78.3,-6.0L76.8,-5.8Z"/><path fill="#5C2E0E" d="M91.2,-0.0L91.0,-5.3L90.6,-10.6L89.8,-15.8L88.7,-21.0L87.4,-26.2L85.7,-31.2L91.3,-33.2L93.1,-27.9L94.6,-22.4L95.7,-16.9L96.5,-11.3L97.0,-5.7L97.2,-0.0Z"/><path fill="#703D13" d="M96.9,-0.0L96.7,-5.6L96.2,-11.2L95.4,-16.8L94.3,-22.3L92.8,-27.8L91.0,-33.1L94.3,-34.3L96.1,-28.8L97.6,-23.1L98.8,-17.4L99.6,-11.6L100.1,-5.8L100.3,-0.0Z"/><path fill="#8C541B" d="M100.0,-0.0L99.8,-5.8L99.3,-11.6L98.5,-17.4L97.3,-23.1L95.8,-28.7L94.0,-34.2L96.9,-35.3L98.8,-29.6L100.4,-23.8L101.6,-17.9L102.4,-12.0L103.0,-6.0L103.1,-0.0Z"/><path fill="#9E6524" d="M102.8,-0.0L102.7,-6.0L102.1,-11.9L101.3,-17.9L100.1,-23.7L98.5,-29.5L96.6,-35.2L99.3,-36.2L101.3,-30.3L102.9,-24.4L104.1,-18.4L105.0,-12.3L105.5,-6.1L105.7,-0.0Z"/><path fill="#CD9644" d="M86.0,-30.3L89.1,-31.1L91.9,-31.2L94.4,-30.7L96.8,-29.5L98.9,-27.7L100.7,-25.2L102.1,-22.2L103.1,-18.2L103.5,-14.1L103.2,-10.7L102.4,-7.8L101.0,-5.4L99.2,-3.4L97.0,-2.1L94.4,-1.2L91.2,-0.9Z"/><path fill="#D9A553" d="M86.1,-30.0L89.1,-30.8L91.8,-30.9L94.2,-30.3L96.5,-29.1L98.5,-27.3L100.3,-24.9L101.6,-22.0L102.6,-18.1L103.0,-14.1L102.8,-10.9L101.9,-8.0L100.6,-5.6L98.9,-3.7L96.8,-2.4L94.3,-1.6L91.2,-1.3Z"/><path fill="#CD9644" d="M86.4,-29.1L89.1,-29.8L91.5,-29.8L93.7,-29.3L95.8,-28.1L97.6,-26.4L99.2,-24.2L100.4,-21.5L101.3,-17.9L101.7,-14.2L101.5,-11.2L100.7,-8.5L99.6,-6.3L98.1,-4.6L96.2,-3.3L94.0,-2.5L91.2,-2.2Z"/><path fill="#9E6524" d="M86.6,-28.7L89.1,-29.3L91.4,-29.3L93.5,-28.8L95.4,-27.7L97.1,-26.0L98.6,-23.9L99.8,-21.2L100.7,-17.7L101.0,-14.2L100.8,-11.3L100.2,-8.8L99.1,-6.6L97.7,-4.9L95.9,-3.7L93.8,-2.9L91.2,-2.6Z"/><path fill="#703D13" d="M86.6,-28.4L89.1,-29.0L91.3,-29.0L93.3,-28.4L95.2,-27.4L96.8,-25.7L98.3,-23.6L99.4,-21.0L100.2,-17.7L100.6,-14.2L100.4,-11.4L99.8,-8.9L98.8,-6.8L97.4,-5.2L95.7,-4.0L93.7,-3.2L91.2,-2.9Z"/><path fill="#9E6524" d="M87.0,-27.4L89.1,-27.9L90.9,-27.8L92.7,-27.3L94.3,-26.2L95.7,-24.7L97.0,-22.8L98.0,-20.5L98.7,-17.4L99.0,-14.3L98.9,-11.7L98.4,-9.5L97.6,-7.6L96.4,-6.1L95.0,-5.0L93.3,-4.3L91.1,-4.0Z"/><path fill="#CD9644" d="M87.0,-27.2L89.1,-27.6L90.9,-27.5L92.5,-27.0L94.1,-26.0L95.5,-24.5L96.7,-22.6L97.6,-20.3L98.3,-17.3L98.7,-14.3L98.6,-11.8L98.1,-9.6L97.3,-7.8L96.2,-6.3L94.8,-5.2L93.2,-4.5L91.1,-4.2Z"/><path fill="#E2B260" d="M87.1,-26.9L89.1,-27.3L90.8,-27.2L92.4,-26.7L93.8,-25.7L95.2,-24.2L96.3,-22.4L97.2,-20.2L97.9,-17.3L98.3,-14.3L98.2,-11.9L97.7,-9.8L97.0,-8.0L95.9,-6.5L94.6,-5.5L93.0,-4.8L91.1,-4.5Z"/><path fill="#CD9644" d="M87.4,-26.2L89.0,-26.5L90.5,-26.4L91.9,-25.8L93.2,-24.9L94.4,-23.5L95.4,-21.8L96.2,-19.7L96.8,-17.1L97.1,-14.3L97.1,-12.1L96.7,-10.2L96.1,-8.5L95.2,-7.2L94.1,-6.2L92.7,-5.5L91.0,-5.3Z"/><path fill="#965C1E" d="M87.5,-25.9L89.0,-26.1L90.4,-26.0L91.7,-25.4L92.9,-24.5L94.0,-23.2L94.9,-21.6L95.7,-19.6L96.3,-17.0L96.6,-14.4L96.6,-12.2L96.3,-10.3L95.7,-8.7L94.9,-7.4L93.8,-6.5L92.6,-5.9L91.0,-5.6Z"/><path fill="#56290C" d="M87.5,-25.6L89.0,-25.9L90.3,-25.7L91.5,-25.2L92.7,-24.3L93.7,-23.0L94.6,-21.4L95.4,-19.4L96.0,-16.9L96.3,-14.4L96.2,-12.3L95.9,-10.5L95.4,-8.9L94.6,-7.6L93.7,-6.7L92.5,-6.1L91.0,-5.8Z"/><path fill="#5C2E0E" d="M105.4,-0.0L105.2,-6.1L104.7,-12.2L103.8,-18.3L102.6,-24.3L101.0,-30.2L99.0,-36.0L104.7,-38.1L106.7,-31.9L108.4,-25.7L109.7,-19.3L110.6,-12.9L111.2,-6.5L111.4,-0.0Z"/><path fill="#703D13" d="M111.1,-0.0L110.9,-6.5L110.3,-12.9L109.4,-19.3L108.1,-25.6L106.4,-31.9L104.4,-38.0L107.6,-39.2L109.7,-32.8L111.4,-26.4L112.8,-19.9L113.7,-13.3L114.3,-6.7L114.5,-0.0Z"/><path fill="#8C541B" d="M114.2,-0.0L114.0,-6.6L113.4,-13.3L112.5,-19.8L111.1,-26.3L109.4,-32.8L107.3,-39.1L110.3,-40.1L112.4,-33.7L114.2,-27.1L115.6,-20.4L116.6,-13.6L117.1,-6.8L117.3,-0.0Z"/><path fill="#9E6524" d="M117.0,-0.0L116.8,-6.8L116.3,-13.6L115.3,-20.3L113.9,-27.0L112.1,-33.6L110.0,-40.0L112.7,-41.0L114.9,-34.4L116.7,-27.7L118.1,-20.8L119.1,-13.9L119.7,-7.0L119.9,-0.0Z"/><path fill="#CD9644" d="M99.4,-35.2L102.4,-35.9L105.1,-35.9L107.8,-35.1L110.3,-33.6L112.5,-31.4L114.5,-28.5L116.0,-25.0L117.1,-20.6L117.5,-16.2L117.3,-12.4L116.5,-9.0L115.1,-6.2L113.3,-3.9L111.0,-2.3L108.5,-1.3L105.4,-0.9Z"/><path fill="#D9A553" d="M99.5,-34.8L102.4,-35.5L105.0,-35.5L107.6,-34.7L110.0,-33.2L112.2,-31.0L114.1,-28.2L115.5,-24.8L116.6,-20.6L117.1,-16.2L116.8,-12.5L116.0,-9.2L114.7,-6.4L113.0,-4.2L110.8,-2.6L108.4,-1.6L105.4,-1.3Z"/><path fill="#CD9644" d="M99.8,-34.0L102.4,-34.6L104.8,-34.4L107.1,-33.7L109.3,-32.2L111.2,-30.2L112.9,-27.5L114.3,-24.3L115.3,-20.3L115.7,-16.2L115.5,-12.8L114.8,-9.7L113.7,-7.1L112.1,-5.0L110.2,-3.5L108.0,-2.5L105.4,-2.2Z"/><path fill="#9E6524" d="M99.9,-33.6L102.4,-34.1L104.6,-33.9L106.8,-33.2L108.9,-31.8L110.8,-29.8L112.4,-27.2L113.7,-24.1L114.6,-20.2L115.1,-16.3L114.9,-12.9L114.3,-9.9L113.2,-7.4L111.7,-5.4L109.9,-3.9L107.9,-3.0L105.4,-2.6Z"/><path fill="#703D13" d="M100.0,-33.3L102.4,-33.8L104.6,-33.6L106.7,-32.8L108.7,-31.5L110.5,-29.5L112.1,-27.0L113.3,-23.9L114.2,-20.1L114.6,-16.3L114.5,-13.0L113.9,-10.1L112.9,-7.6L111.5,-5.6L109.8,-4.2L107.8,-3.3L105.4,-2.9Z"/><path fill="#9E6524" d="M100.3,-32.3L102.4,-32.6L104.3,-32.4L106.1,-31.7L107.8,-30.3L109.4,-28.5L110.8,-26.1L111.9,-23.3L112.7,-19.9L113.1,-16.3L113.0,-13.3L112.5,-10.6L111.7,-8.4L110.5,-6.5L109.1,-5.2L107.4,-4.3L105.3,-4.0Z"/><path fill="#CD9644" d="M100.4,-32.0L102.4,-32.4L104.2,-32.2L105.9,-31.4L107.6,-30.1L109.1,-28.3L110.5,-26.0L111.5,-23.2L112.3,-19.8L112.7,-16.3L112.7,-13.4L112.2,-10.8L111.4,-8.5L110.3,-6.7L108.9,-5.4L107.3,-4.6L105.3,-4.2Z"/><path fill="#E2B260" d="M100.5,-31.8L102.4,-32.1L104.1,-31.8L105.8,-31.1L107.4,-29.8L108.8,-28.0L110.1,-25.7L111.1,-23.0L111.9,-19.7L112.3,-16.3L112.3,-13.5L111.8,-10.9L111.1,-8.7L110.0,-7.0L108.7,-5.7L107.2,-4.9L105.3,-4.5Z"/><path fill="#CD9644" d="M100.7,-31.0L102.4,-31.3L103.9,-31.0L105.3,-30.2L106.7,-29.0L108.0,-27.3L109.1,-25.2L110.1,-22.6L110.8,-19.5L111.2,-16.4L111.2,-13.7L110.8,-11.3L110.2,-9.3L109.3,-7.6L108.2,-6.4L106.9,-5.6L105.3,-5.3Z"/><path fill="#965C1E" d="M100.8,-30.7L102.3,-30.9L103.7,-30.6L105.1,-29.9L106.4,-28.6L107.7,-27.0L108.7,-24.9L109.6,-22.5L110.3,-19.4L110.7,-16.4L110.7,-13.8L110.4,-11.5L109.8,-9.5L109.0,-7.9L108.0,-6.7L106.7,-6.0L105.2,-5.7Z"/><path fill="#56290C" d="M100.9,-30.4L102.3,-30.6L103.7,-30.4L105.0,-29.6L106.2,-28.4L107.4,-26.8L108.4,-24.7L109.3,-22.3L110.0,-19.4L110.3,-16.4L110.4,-13.8L110.1,-11.6L109.5,-9.7L108.8,-8.1L107.8,-6.9L106.6,-6.2L105.2,-5.9Z"/><path fill="#5C2E0E" d="M119.6,-0.0L119.4,-7.0L118.8,-13.9L117.8,-20.8L116.4,-27.6L114.6,-34.3L112.4,-40.9L118.0,-43.0L120.3,-36.0L122.2,-29.0L123.7,-21.8L124.7,-14.6L125.4,-7.3L125.6,-0.0Z"/><path fill="#703D13" d="M125.3,-0.0L125.1,-7.3L124.4,-14.5L123.4,-21.8L121.9,-28.9L120.0,-35.9L117.7,-42.8L120.9,-44.0L123.3,-36.9L125.2,-29.7L126.7,-22.3L127.8,-14.9L128.5,-7.5L128.7,-0.0Z"/><path fill="#8C541B" d="M128.4,-0.0L128.2,-7.5L127.5,-14.9L126.5,-22.3L124.9,-29.6L123.0,-36.8L120.7,-43.9L123.6,-45.0L126.0,-37.7L128.0,-30.3L129.5,-22.8L130.7,-15.3L131.3,-7.6L131.5,-0.0Z"/><path fill="#9E6524" d="M131.2,-0.0L131.0,-7.6L130.4,-15.2L129.3,-22.8L127.7,-30.3L125.7,-37.6L123.3,-44.9L126.0,-45.9L128.5,-38.5L130.5,-30.9L132.1,-23.3L133.2,-15.6L133.9,-7.8L134.1,-0.0Z"/><path fill="#CD9644" d="M112.7,-40.0L115.6,-40.6L118.4,-40.4L121.1,-39.4L123.8,-37.6L126.2,-35.0L128.3,-31.7L129.9,-27.8L131.1,-23.1L131.6,-18.3L131.4,-14.1L130.5,-10.3L129.2,-7.0L127.3,-4.4L125.1,-2.5L122.5,-1.3L119.6,-0.9Z"/><path fill="#D9A553" d="M112.8,-39.7L115.6,-40.3L118.3,-40.1L120.9,-39.1L123.5,-37.2L125.8,-34.7L127.9,-31.4L129.5,-27.6L130.6,-23.0L131.1,-18.3L130.9,-14.2L130.1,-10.4L128.8,-7.2L127.0,-4.7L124.9,-2.8L122.4,-1.7L119.6,-1.3Z"/><path fill="#CD9644" d="M113.1,-38.8L115.6,-39.3L118.1,-39.0L120.5,-38.0L122.8,-36.3L124.9,-33.8L126.7,-30.7L128.2,-27.1L129.3,-22.8L129.7,-18.4L129.6,-14.5L128.9,-10.9L127.8,-7.9L126.2,-5.5L124.3,-3.7L122.1,-2.6L119.6,-2.2Z"/><path fill="#9E6524" d="M113.3,-38.4L115.6,-38.8L117.9,-38.6L120.2,-37.5L122.4,-35.8L124.4,-33.4L126.2,-30.4L127.6,-26.9L128.6,-22.7L129.1,-18.4L129.0,-14.6L128.4,-11.2L127.3,-8.2L125.8,-5.8L124.0,-4.1L121.9,-3.0L119.6,-2.7Z"/><path fill="#703D13" d="M113.4,-38.1L115.6,-38.5L117.9,-38.2L120.1,-37.2L122.2,-35.5L124.1,-33.2L125.9,-30.2L127.2,-26.7L128.2,-22.6L128.7,-18.4L128.6,-14.7L128.0,-11.3L127.0,-8.4L125.6,-6.1L123.8,-4.4L121.8,-3.3L119.6,-3.0Z"/><path fill="#9E6524" d="M113.7,-37.1L115.7,-37.4L117.6,-37.0L119.5,-36.0L121.3,-34.4L123.0,-32.2L124.5,-29.4L125.8,-26.2L126.7,-22.3L127.1,-18.4L127.1,-15.0L126.6,-11.9L125.8,-9.2L124.6,-7.0L123.2,-5.4L121.5,-4.4L119.5,-4.0Z"/><path fill="#CD9644" d="M113.8,-36.9L115.7,-37.1L117.5,-36.8L119.3,-35.8L121.1,-34.2L122.8,-32.0L124.3,-29.2L125.4,-26.0L126.3,-22.3L126.8,-18.4L126.8,-15.0L126.3,-12.0L125.5,-9.3L124.4,-7.2L123.0,-5.6L121.4,-4.6L119.5,-4.3Z"/><path fill="#E2B260" d="M113.9,-36.6L115.7,-36.8L117.4,-36.5L119.2,-35.5L120.9,-33.9L122.5,-31.7L123.9,-29.0L125.0,-25.9L125.9,-22.2L126.3,-18.5L126.3,-15.1L125.9,-12.1L125.2,-9.5L124.1,-7.4L122.8,-5.9L121.3,-4.9L119.5,-4.6Z"/><path fill="#CD9644" d="M114.1,-35.8L115.7,-36.0L117.2,-35.6L118.8,-34.6L120.3,-33.1L121.7,-31.0L122.9,-28.4L124.0,-25.5L124.8,-22.0L125.2,-18.5L125.3,-15.3L124.9,-12.5L124.3,-10.1L123.4,-8.1L122.3,-6.6L121.0,-5.7L119.5,-5.4Z"/><path fill="#965C1E" d="M114.2,-35.5L115.7,-35.7L117.1,-35.2L118.6,-34.3L120.0,-32.7L121.3,-30.7L122.5,-28.2L123.5,-25.3L124.3,-21.9L124.7,-18.5L124.8,-15.4L124.5,-12.7L123.9,-10.3L123.1,-8.4L122.1,-6.9L120.9,-6.0L119.5,-5.7Z"/><path fill="#56290C" d="M114.3,-35.3L115.7,-35.4L117.0,-35.0L118.4,-34.0L119.8,-32.5L121.1,-30.5L122.2,-28.0L123.2,-25.2L123.9,-21.9L124.4,-18.5L124.4,-15.5L124.2,-12.8L123.7,-10.5L122.9,-8.6L121.9,-7.2L120.8,-6.3L119.5,-5.9Z"/><path fill="#5C2E0E" d="M133.8,-0.0L133.6,-7.8L132.9,-15.5L131.8,-23.2L130.2,-30.9L128.2,-38.4L125.7,-45.8L131.4,-47.8L133.9,-40.1L136.0,-32.2L137.7,-24.3L138.8,-16.2L139.5,-8.1L139.8,-0.0Z"/><path fill="#703D13" d="M139.5,-0.0L139.2,-8.1L138.5,-16.2L137.4,-24.2L135.7,-32.2L133.6,-40.0L131.1,-47.7L134.3,-48.9L136.9,-41.0L139.1,-33.0L140.7,-24.8L141.9,-16.6L142.7,-8.3L142.9,-0.0Z"/><path fill="#8C541B" d="M142.6,-0.0L142.4,-8.3L141.6,-16.6L140.4,-24.8L138.8,-32.9L136.6,-40.9L134.0,-48.8L137.0,-49.8L139.6,-41.8L141.8,-33.6L143.5,-25.3L144.8,-16.9L145.5,-8.5L145.7,-0.0Z"/><path fill="#9E6524" d="M145.4,-0.0L145.2,-8.5L144.5,-16.9L143.2,-25.3L141.5,-33.5L139.3,-41.7L136.7,-49.7L139.4,-50.7L142.1,-42.5L144.3,-34.2L146.0,-25.8L147.3,-17.2L148.0,-8.6L148.3,-0.0Z"/><path fill="#CD9644" d="M126.1,-44.9L128.8,-45.4L131.6,-45.0L134.5,-43.8L137.3,-41.6L139.9,-38.6L142.1,-34.8L143.8,-30.5L145.1,-25.6L145.6,-20.5L145.4,-15.9L144.6,-11.6L143.2,-7.9L141.3,-4.9L139.1,-2.7L136.6,-1.4L133.8,-0.9Z"/><path fill="#D9A553" d="M126.2,-44.5L128.8,-45.0L131.5,-44.6L134.3,-43.4L137.0,-41.2L139.5,-38.3L141.7,-34.6L143.4,-30.3L144.6,-25.5L145.1,-20.6L145.0,-15.9L144.2,-11.7L142.9,-8.1L141.1,-5.2L138.9,-3.0L136.5,-1.7L133.8,-1.3Z"/><path fill="#CD9644" d="M126.5,-43.7L128.9,-44.1L131.3,-43.6L133.8,-42.4L136.3,-40.3L138.6,-37.4L140.6,-33.9L142.1,-29.8L143.2,-25.3L143.8,-20.6L143.7,-16.2L143.0,-12.2L141.8,-8.8L140.3,-6.0L138.3,-3.9L136.2,-2.7L133.8,-2.2Z"/><path fill="#9E6524" d="M126.6,-43.2L128.9,-43.6L131.2,-43.1L133.6,-41.9L136.0,-39.8L138.1,-37.0L140.0,-33.6L141.5,-29.6L142.6,-25.1L143.1,-20.6L143.1,-16.3L142.5,-12.4L141.4,-9.1L139.9,-6.3L138.1,-4.3L136.0,-3.1L133.8,-2.7Z"/><path fill="#703D13" d="M126.7,-43.0L128.9,-43.3L131.2,-42.8L133.5,-41.6L135.7,-39.5L137.8,-36.8L139.7,-33.4L141.1,-29.5L142.2,-25.1L142.7,-20.6L142.7,-16.4L142.1,-12.6L141.1,-9.3L139.6,-6.6L137.9,-4.6L135.9,-3.4L133.8,-3.0Z"/><path fill="#9E6524" d="M127.1,-41.9L128.9,-42.2L130.9,-41.6L132.9,-40.4L134.9,-38.4L136.7,-35.8L138.4,-32.6L139.7,-28.9L140.6,-24.8L141.2,-20.6L141.2,-16.7L140.7,-13.1L139.9,-10.0L138.7,-7.5L137.2,-5.6L135.6,-4.5L133.7,-4.1Z"/><path fill="#CD9644" d="M127.1,-41.7L128.9,-41.9L130.8,-41.4L132.8,-40.1L134.7,-38.2L136.5,-35.6L138.1,-32.4L139.4,-28.8L140.3,-24.7L140.8,-20.6L140.8,-16.8L140.4,-13.2L139.6,-10.2L138.5,-7.7L137.1,-5.9L135.5,-4.7L133.7,-4.3Z"/><path fill="#E2B260" d="M127.2,-41.4L128.9,-41.6L130.7,-41.1L132.6,-39.8L134.4,-37.9L136.2,-35.3L137.7,-32.2L139.0,-28.6L139.9,-24.7L140.4,-20.6L140.4,-16.8L140.0,-13.4L139.3,-10.4L138.2,-7.9L136.9,-6.1L135.4,-5.0L133.7,-4.6Z"/><path fill="#CD9644" d="M127.5,-40.7L129.0,-40.8L130.5,-40.2L132.2,-39.0L133.8,-37.1L135.4,-34.6L136.8,-31.6L137.9,-28.2L138.8,-24.5L139.2,-20.6L139.3,-17.0L139.1,-13.8L138.4,-10.9L137.5,-8.6L136.4,-6.9L135.1,-5.8L133.7,-5.4Z"/><path fill="#965C1E" d="M127.6,-40.3L129.0,-40.4L130.5,-39.8L132.0,-38.6L133.6,-36.8L135.0,-34.3L136.3,-31.4L137.4,-28.1L138.3,-24.4L138.8,-20.6L138.9,-17.1L138.6,-13.9L138.1,-11.1L137.2,-8.9L136.2,-7.2L135.0,-6.1L133.7,-5.7Z"/><path fill="#56290C" d="M127.7,-40.1L129.0,-40.2L130.4,-39.6L131.9,-38.4L133.4,-36.5L134.8,-34.1L136.0,-31.2L137.1,-28.0L137.9,-24.3L138.4,-20.6L138.5,-17.2L138.3,-14.0L137.8,-11.3L137.0,-9.1L136.1,-7.4L134.9,-6.4L133.7,-6.0Z"/><path fill="#5C2E0E" d="M148.0,-0.0L147.7,-8.6L147.0,-17.2L145.8,-25.7L144.0,-34.1L141.8,-42.4L139.1,-50.6L144.7,-52.7L147.5,-44.2L149.8,-35.5L151.6,-26.7L152.9,-17.9L153.7,-9.0L154.0,-0.0Z"/><path fill="#703D13" d="M153.7,-0.0L153.4,-8.9L152.6,-17.8L151.3,-26.7L149.5,-35.4L147.2,-44.1L144.4,-52.6L147.6,-53.7L150.5,-45.1L152.9,-36.2L154.7,-27.3L156.0,-18.2L156.8,-9.1L157.1,-0.0Z"/><path fill="#8C541B" d="M156.8,-0.0L156.5,-9.1L155.7,-18.2L154.4,-27.2L152.6,-36.2L150.2,-45.0L147.3,-53.6L150.3,-54.7L153.2,-45.9L155.6,-36.9L157.5,-27.8L158.9,-18.6L159.7,-9.3L159.9,-0.0Z"/><path fill="#9E6524" d="M159.6,-0.0L159.4,-9.3L158.6,-18.5L157.2,-27.7L155.3,-36.8L152.9,-45.8L150.0,-54.6L152.7,-55.6L155.7,-46.6L158.1,-37.5L160.0,-28.2L161.4,-18.9L162.2,-9.4L162.5,-0.0Z"/><path fill="#CD9644" d="M139.4,-49.7L142.0,-50.1L144.9,-49.6L147.9,-48.0L150.8,-45.5L153.5,-42.1L155.9,-37.9L157.8,-33.1L159.0,-28.0L159.6,-22.8L159.5,-17.7L158.7,-13.0L157.3,-8.8L155.4,-5.4L153.1,-3.0L150.6,-1.5L148.0,-1.0Z"/><path fill="#D9A553" d="M139.5,-49.4L142.0,-49.8L144.8,-49.2L147.7,-47.7L150.5,-45.2L153.2,-41.8L155.5,-37.7L157.3,-33.0L158.5,-28.0L159.1,-22.8L159.0,-17.8L158.2,-13.1L156.9,-9.0L155.1,-5.7L152.9,-3.3L150.5,-1.8L148.0,-1.3Z"/><path fill="#CD9644" d="M139.8,-48.5L142.1,-48.8L144.6,-48.2L147.2,-46.7L149.8,-44.2L152.3,-41.0L154.4,-37.0L156.1,-32.5L157.2,-27.7L157.8,-22.8L157.7,-18.0L157.1,-13.6L155.9,-9.7L154.3,-6.5L152.4,-4.2L150.2,-2.7L148.0,-2.2Z"/><path fill="#9E6524" d="M140.0,-48.1L142.1,-48.3L144.5,-47.7L147.0,-46.2L149.5,-43.8L151.8,-40.6L153.9,-36.7L155.5,-32.3L156.6,-27.6L157.1,-22.8L157.1,-18.2L156.5,-13.8L155.4,-10.0L153.9,-6.9L152.1,-4.6L150.1,-3.2L148.0,-2.7Z"/><path fill="#703D13" d="M140.1,-47.8L142.1,-48.0L144.4,-47.4L146.9,-45.9L149.3,-43.5L151.5,-40.3L153.5,-36.5L155.1,-32.1L156.2,-27.5L156.7,-22.8L156.7,-18.2L156.2,-13.9L155.1,-10.2L153.7,-7.1L151.9,-4.9L150.0,-3.5L148.0,-3.0Z"/><path fill="#9E6524" d="M140.4,-46.8L142.2,-46.9L144.2,-46.2L146.3,-44.7L148.4,-42.4L150.4,-39.4L152.2,-35.7L153.6,-31.6L154.6,-27.3L155.2,-22.8L155.2,-18.5L154.8,-14.5L154.0,-10.9L152.8,-8.0L151.3,-5.9L149.7,-4.6L147.9,-4.1Z"/><path fill="#CD9644" d="M140.5,-46.5L142.2,-46.7L144.1,-46.0L146.2,-44.5L148.2,-42.2L150.2,-39.1L151.9,-35.5L153.3,-31.5L154.3,-27.2L154.8,-22.8L154.9,-18.6L154.5,-14.6L153.7,-11.1L152.6,-8.2L151.2,-6.1L149.6,-4.8L147.9,-4.3Z"/><path fill="#E2B260" d="M140.6,-46.3L142.2,-46.4L144.1,-45.7L146.0,-44.1L148.0,-41.9L149.9,-38.9L151.5,-35.3L152.9,-31.3L153.9,-27.1L154.4,-22.8L154.5,-18.6L154.1,-14.7L153.4,-11.3L152.3,-8.5L151.0,-6.4L149.5,-5.1L147.9,-4.6Z"/><path fill="#CD9644" d="M140.8,-45.5L142.3,-45.5L143.9,-44.8L145.6,-43.3L147.4,-41.1L149.1,-38.2L150.6,-34.8L151.8,-31.0L152.7,-26.9L153.3,-22.8L153.4,-18.8L153.2,-15.1L152.6,-11.8L151.7,-9.1L150.5,-7.1L149.3,-5.9L147.9,-5.4Z"/><path fill="#965C1E" d="M140.9,-45.2L142.3,-45.2L143.8,-44.4L145.4,-43.0L147.1,-40.7L148.7,-37.9L150.2,-34.5L151.4,-30.8L152.3,-26.8L152.8,-22.8L152.9,-18.9L152.7,-15.2L152.2,-12.0L151.4,-9.4L150.3,-7.4L149.1,-6.2L147.9,-5.8Z"/><path fill="#56290C" d="M141.0,-44.9L142.3,-44.9L143.7,-44.2L145.3,-42.7L146.9,-40.5L148.5,-37.7L149.9,-34.4L151.0,-30.7L151.9,-26.8L152.4,-22.8L152.6,-19.0L152.4,-15.4L151.9,-12.2L151.2,-9.6L150.2,-7.6L149.1,-6.4L147.9,-6.0Z"/><path fill="#5C2E0E" d="M162.2,-0.0L161.9,-9.4L161.1,-18.8L159.7,-28.2L157.8,-37.4L155.4,-46.5L152.4,-55.5L158.0,-57.5L161.1,-48.2L163.6,-38.8L165.6,-29.2L167.0,-19.5L167.9,-9.8L168.2,-0.0Z"/><path fill="#703D13" d="M167.9,-0.0L167.6,-9.8L166.7,-19.5L165.3,-29.2L163.4,-38.7L160.8,-48.1L157.8,-57.4L161.0,-58.6L164.1,-49.1L166.7,-39.5L168.7,-29.7L170.1,-19.9L171.0,-10.0L171.3,-0.0Z"/><path fill="#8C541B" d="M171.0,-0.0L170.7,-9.9L169.8,-19.9L168.4,-29.7L166.4,-39.4L163.8,-49.0L160.7,-58.5L163.6,-59.6L166.8,-49.9L169.4,-40.2L171.5,-30.2L173.0,-20.2L173.8,-10.1L174.1,-0.0Z"/><path fill="#9E6524" d="M173.8,-0.0L173.5,-10.1L172.7,-20.2L171.2,-30.2L169.2,-40.1L166.5,-49.9L163.4,-59.5L166.0,-60.4L169.3,-50.7L171.9,-40.7L174.0,-30.7L175.5,-20.5L176.4,-10.3L176.7,-0.0Z"/><path fill="#CD9644" d="M152.7,-54.6L155.2,-54.9L158.1,-54.1L161.2,-52.3L164.3,-49.4L167.2,-45.5L169.8,-40.9L171.7,-35.7L173.0,-30.5L173.6,-25.2L173.5,-19.6L172.7,-14.4L171.3,-9.8L169.4,-6.0L167.1,-3.2L164.6,-1.5L162.2,-1.0Z"/><path fill="#D9A553" d="M152.9,-54.2L155.3,-54.5L158.1,-53.8L161.1,-51.9L164.1,-49.0L166.9,-45.2L169.4,-40.6L171.3,-35.6L172.5,-30.4L173.1,-25.2L173.0,-19.7L172.3,-14.6L171.0,-10.0L169.1,-6.3L166.9,-3.6L164.5,-1.9L162.2,-1.3Z"/><path fill="#CD9644" d="M153.2,-53.4L155.3,-53.5L157.9,-52.7L160.6,-50.9L163.4,-48.1L166.0,-44.4L168.2,-40.0L170.0,-35.1L171.2,-30.2L171.8,-25.2L171.8,-20.0L171.1,-15.0L170.0,-10.7L168.4,-7.1L166.4,-4.4L164.3,-2.8L162.2,-2.3Z"/><path fill="#9E6524" d="M153.3,-52.9L155.4,-53.1L157.8,-52.3L160.4,-50.5L163.0,-47.7L165.5,-44.0L167.7,-39.7L169.4,-34.9L170.6,-30.1L171.1,-25.2L171.2,-20.1L170.6,-15.2L169.5,-11.0L168.0,-7.5L166.2,-4.9L164.2,-3.3L162.2,-2.7Z"/><path fill="#703D13" d="M153.4,-52.6L155.4,-52.8L157.7,-52.0L160.3,-50.1L162.8,-47.4L165.2,-43.8L167.3,-39.5L169.0,-34.8L170.2,-30.0L170.7,-25.1L170.8,-20.1L170.2,-15.4L169.2,-11.2L167.7,-7.7L166.0,-5.1L164.1,-3.5L162.2,-3.0Z"/><path fill="#9E6524" d="M153.8,-51.6L155.5,-51.7L157.5,-50.8L159.7,-49.0L162.0,-46.3L164.1,-42.8L166.0,-38.7L167.6,-34.2L168.6,-29.7L169.2,-25.1L169.3,-20.4L168.9,-15.9L168.1,-11.9L166.9,-8.6L165.4,-6.1L163.8,-4.6L162.1,-4.1Z"/><path fill="#CD9644" d="M153.8,-51.4L155.5,-51.4L157.5,-50.5L159.6,-48.7L161.8,-46.1L163.9,-42.6L165.7,-38.6L167.2,-34.1L168.3,-29.7L168.8,-25.1L168.9,-20.4L168.6,-16.0L167.8,-12.0L166.7,-8.8L165.3,-6.4L163.7,-4.9L162.1,-4.3Z"/><path fill="#E2B260" d="M153.9,-51.1L155.5,-51.1L157.4,-50.2L159.5,-48.4L161.6,-45.8L163.6,-42.4L165.4,-38.4L166.8,-34.0L167.8,-29.6L168.4,-25.1L168.5,-20.5L168.2,-16.1L167.5,-12.2L166.4,-9.0L165.1,-6.6L163.6,-5.2L162.1,-4.6Z"/><path fill="#CD9644" d="M154.2,-50.3L155.6,-50.3L157.2,-49.4L159.1,-47.6L161.0,-45.0L162.8,-41.7L164.4,-37.8L165.8,-33.6L166.7,-29.4L167.3,-25.1L167.5,-20.7L167.2,-16.5L166.7,-12.8L165.8,-9.7L164.6,-7.4L163.4,-5.9L162.1,-5.4Z"/><path fill="#965C1E" d="M154.3,-50.0L155.6,-49.9L157.2,-49.0L158.9,-47.2L160.7,-44.7L162.4,-41.4L164.0,-37.6L165.3,-33.5L166.2,-29.3L166.8,-25.1L167.0,-20.8L166.8,-16.6L166.3,-13.0L165.5,-9.9L164.4,-7.7L163.3,-6.3L162.1,-5.8Z"/><path fill="#56290C" d="M154.4,-49.8L155.6,-49.7L157.1,-48.8L158.8,-47.0L160.5,-44.4L162.2,-41.2L163.7,-37.4L165.0,-33.3L165.9,-29.3L166.4,-25.1L166.7,-20.8L166.5,-16.7L166.0,-13.1L165.3,-10.1L164.3,-7.9L163.2,-6.5L162.1,-6.0Z"/><path fill="#5C2E0E" d="M176.4,-0.0L176.1,-10.3L175.2,-20.5L173.7,-30.6L171.6,-40.7L169.0,-50.6L165.8,-60.3L171.4,-62.4L174.7,-52.3L177.5,-42.1L179.6,-31.7L181.1,-21.2L182.1,-10.6L182.4,-0.0Z"/><path fill="#703D13" d="M182.1,-0.0L181.8,-10.6L180.8,-21.1L179.3,-31.6L177.2,-42.0L174.4,-52.2L171.1,-62.3L174.3,-63.4L177.7,-53.2L180.5,-42.8L182.7,-32.2L184.2,-21.5L185.2,-10.8L185.5,-0.0Z"/><path fill="#8C541B" d="M185.2,-0.0L184.9,-10.8L184.0,-21.5L182.4,-32.2L180.2,-42.7L177.4,-53.1L174.0,-63.3L177.0,-64.4L180.4,-54.0L183.3,-43.4L185.5,-32.7L187.1,-21.9L188.0,-11.0L188.3,-0.0Z"/><path fill="#9E6524" d="M188.0,-0.0L187.7,-10.9L186.8,-21.8L185.2,-32.7L183.0,-43.4L180.1,-53.9L176.7,-64.3L179.4,-65.3L182.9,-54.8L185.8,-44.0L188.0,-33.1L189.6,-22.2L190.6,-11.1L190.9,-0.0Z"/><path fill="#CD9644" d="M166.1,-59.4L168.4,-59.6L171.4,-58.6L174.6,-56.5L177.9,-53.2L181.0,-48.9L183.6,-43.8L185.7,-38.3L187.0,-33.0L187.6,-27.6L187.5,-21.7L186.8,-16.0L185.3,-10.9L183.4,-6.6L181.1,-3.5L178.7,-1.6L176.4,-1.0Z"/><path fill="#D9A553" d="M166.2,-59.1L168.5,-59.2L171.3,-58.3L174.5,-56.1L177.6,-52.8L180.6,-48.6L183.2,-43.5L185.2,-38.1L186.5,-32.9L187.1,-27.6L187.1,-21.7L186.3,-16.1L185.0,-11.1L183.1,-6.9L180.9,-3.8L178.6,-2.0L176.4,-1.3Z"/><path fill="#CD9644" d="M166.5,-58.2L168.6,-58.3L171.2,-57.3L174.0,-55.1L176.9,-51.9L179.7,-47.8L182.1,-42.9L184.0,-37.7L185.2,-32.7L185.8,-27.5L185.8,-22.0L185.2,-16.6L184.0,-11.7L182.4,-7.7L180.4,-4.7L178.3,-2.9L176.4,-2.3Z"/><path fill="#9E6524" d="M166.7,-57.8L168.6,-57.8L171.1,-56.8L173.8,-54.7L176.6,-51.5L179.2,-47.4L181.6,-42.6L183.4,-37.5L184.6,-32.5L185.1,-27.5L185.2,-22.1L184.6,-16.8L183.6,-12.0L182.0,-8.1L180.2,-5.1L178.2,-3.3L176.4,-2.7Z"/><path fill="#703D13" d="M166.8,-57.5L168.6,-57.5L171.0,-56.5L173.7,-54.4L176.4,-51.2L178.9,-47.2L181.2,-42.4L183.0,-37.3L184.1,-32.5L184.7,-27.5L184.8,-22.1L184.3,-16.9L183.3,-12.2L181.8,-8.3L180.0,-5.4L178.2,-3.6L176.4,-3.0Z"/><path fill="#9E6524" d="M167.1,-56.5L168.7,-56.4L170.8,-55.3L173.2,-53.2L175.6,-50.2L177.9,-46.2L179.9,-41.7L181.5,-36.8L182.6,-32.2L183.2,-27.5L183.3,-22.3L183.0,-17.4L182.1,-12.9L180.9,-9.2L179.5,-6.4L177.9,-4.7L176.4,-4.1Z"/><path fill="#CD9644" d="M167.2,-56.2L168.8,-56.2L170.8,-55.1L173.0,-53.0L175.4,-49.9L177.6,-46.0L179.6,-41.5L181.2,-36.7L182.3,-32.1L182.8,-27.5L183.0,-22.4L182.7,-17.5L181.9,-13.1L180.7,-9.4L179.3,-6.6L177.8,-4.9L176.3,-4.4Z"/><path fill="#E2B260" d="M167.3,-55.9L168.8,-55.9L170.7,-54.8L172.9,-52.7L175.2,-49.6L177.3,-45.8L179.3,-41.3L180.8,-36.6L181.8,-32.1L182.4,-27.5L182.6,-22.5L182.3,-17.6L181.6,-13.3L180.5,-9.6L179.2,-6.9L177.7,-5.2L176.3,-4.7Z"/><path fill="#CD9644" d="M167.5,-55.2L168.9,-55.0L170.6,-53.9L172.5,-51.9L174.6,-48.9L176.5,-45.1L178.3,-40.8L179.7,-36.2L180.7,-31.9L181.3,-27.4L181.5,-22.6L181.3,-18.0L180.7,-13.8L179.9,-10.3L178.7,-7.7L177.5,-6.0L176.3,-5.5Z"/><path fill="#965C1E" d="M167.7,-54.8L168.9,-54.7L170.5,-53.6L172.4,-51.5L174.3,-48.6L176.2,-44.8L177.9,-40.6L179.3,-36.1L180.2,-31.8L180.8,-27.4L181.0,-22.7L180.9,-18.1L180.4,-14.0L179.6,-10.5L178.5,-8.0L177.4,-6.4L176.3,-5.8Z"/><path fill="#56290C" d="M167.7,-54.6L168.9,-54.4L170.5,-53.3L172.2,-51.3L174.1,-48.3L175.9,-44.6L177.6,-40.4L178.9,-35.9L179.9,-31.7L180.4,-27.4L180.7,-22.7L180.6,-18.2L180.1,-14.1L179.4,-10.7L178.4,-8.2L177.3,-6.6L176.3,-6.1Z"/></g></defs><rect width="297" height="207" fill="#965C1E"/><g filter="url(#bl)"><g transform="translate(147.7,103.3)"><circle r="6.5" fill="#7C4817"/><circle r="3" fill="#CD9644"/><use href="#w" transform="rotate(0)"/><use href="#w" transform="rotate(-20)"/><use href="#w" transform="rotate(-40)"/><use href="#w" transform="rotate(-60)"/><use href="#w" transform="rotate(-80)"/><use href="#w" transform="rotate(-100)"/><use href="#w" transform="rotate(-120)"/><use href="#w" transform="rotate(-140)"/><use href="#w" transform="rotate(-160)"/><use href="#w" transform="rotate(-180)"/><use href="#w" transform="rotate(-200)"/><use href="#w" transform="rotate(-220)"/><use href="#w" transform="rotate(-240)"/><use href="#w" transform="rotate(-260)"/><use href="#w" transform="rotate(-280)"/><use href="#w" transform="rotate(-300)"/><use href="#w" transform="rotate(-320)"/><use href="#w" transform="rotate(-340)"/></g></g></svg>
<div class="t" style="left:421px;width:299px;top:277px;text-align:center">Radial Rodeo</div>
<div class="a" style="left:421px;top:296px;width:299px;height:11px;box-sizing:border-box;border:1px solid #555;border-radius:3px;background:#fff"></div>
<div class="a" style="left:421px;top:328px;width:299px;height:17px;background:#fff"></div>
<div class="a" style="left:421px;top:345px;width:299px;height:1px;background:#F2F0E6"></div>
<div class="t" style="left:423px;top:328.5px">Theta Tiles</div>
<div class="t" style="left:660px;width:57.5px;text-align:right;top:328.5px">9</div>
<div class="a" style="left:421px;top:346px;width:299px;height:17px;background:#fff"></div>
<div class="a" style="left:421px;top:363px;width:299px;height:1px;background:#F2F0E6"></div>
<div class="t" style="left:423px;top:346.5px">Rho Tiles</div>
<div class="t" style="left:660px;width:57.5px;text-align:right;top:346.5px">13</div>
<div class="a" style="left:421px;top:364px;width:299px;height:17px;background:#fff"></div>
<div class="a" style="left:421px;top:381px;width:299px;height:1px;background:#F2F0E6"></div>
<div class="t" style="left:423px;top:364.5px">Period</div>
<div class="t" style="left:660px;width:57.5px;text-align:right;top:364.5px">230</div>
<div class="a" style="left:421px;top:382px;width:299px;height:17px;background:#fff"></div>
<div class="a" style="left:421px;top:399px;width:299px;height:1px;background:#F2F0E6"></div>
<div class="a" style="left:421px;top:400px;width:299px;height:17px;background:#fff"></div>
<div class="a" style="left:421px;top:417px;width:299px;height:1px;background:#F2F0E6"></div>
<div class="a" style="left:421px;top:418px;width:299px;height:17px;background:#fff"></div>
<div class="a" style="left:421px;top:435px;width:299px;height:1px;background:#F2F0E6"></div>
<div class="a" style="left:421px;top:436px;width:299px;height:17px;background:#fff"></div>
<div class="a" style="left:421px;top:453px;width:299px;height:1px;background:#F2F0E6"></div>
<div class="a" style="left:421px;top:454px;width:299px;height:16px;background:#fff"></div>
<svg class="a" style="left:421px;top:328px" width="299" height="60" viewBox="421 328 299 60"><path d="M423,345 L432,340 L441,345 Z M427,363 L437,358 L447,363 Z M681.5,381 L690,371.5 L698.5,381 Z" fill="#E9E6D6"/></svg>
<div class="t" style="left:510px;top:377px;font-size:18px;line-height:22px;height:22px;color:#A0A6C4;letter-spacing:0.6px;text-shadow:0 0 1px #B4B9D0,1px 1px 1px #CDD0DC">Pinuccia</div>
<div class="t" style="left:479px;top:399px;font-size:10px;color:#9298B4;letter-spacing:0.3px;text-shadow:0 0 1px #A6ABC2;font-family:'DejaVu Sans',sans-serif">www.maidiregrafica.eu</div>
<div class="a" style="left:558px;top:477px;width:78px;height:20px;box-sizing:border-box;border:1px solid;border-color:#fff #ACA899 #ACA899 #fff;background:#ECE9D8"></div>
<div class="t b" style="left:558px;width:78px;text-align:center;top:480px">Randomize</div>
<div class="t b" style="left:650px;width:60px;text-align:center;top:480px">Reset</div>
<div class="t l" style="left:7px;top:514px">Database:</div><div class="t" style="left:64px;top:514px;transform:scaleX(0.943);transform-origin:0 0">ICNET-Filters</div>
<div class="t l" style="left:7px;top:527.5px">Filters:</div><div class="t" style="left:64px;top:527.5px">1153</div>
<div class="btn" style="left:506px;top:515px;width:67px;box-shadow:inset 0 0 0 2px #A9C2F0">Apply</div>
<div class="btn" style="left:582px;top:515px;width:67px">Cancel</div>
<div class="btn" style="left:659px;top:515px;width:67px">Help</div>
<div class="a" style="left:734px;top:0;width:1px;height:538px;background:#C4C1B4"></div>
<div class="a" style="left:735px;top:0;width:1px;height:538px;background:#8E8E88"></div>
<div class="a" style="left:736px;top:0;width:2px;height:538px;background:linear-gradient(#F6F5EE 0px,#F6F5EE 20px,#B8B8B0 20px,#B8B8B0 21px,#F0EEE2 21px,#F0EEE2 66px,#6A6A60 66px,#6A6A60 72px,#F0EEE2 72px,#F0EEE2 83px,#A0A0A0 83px,#A0A0A0 84px,#FFFFFF 84px,#FFFFFF 128px,#B8E8A8 128px,#B8E8A8 134px,#D06060 134px,#D06060 135px,#141414 135px,#141414 239px,#F08020 239px,#F08020 243px,#505050 243px,#505050 265px,#D8D8D8 265px,#D8D8D8 335px,#A8A8A8 335px,#A8A8A8 336px,#D4D4D4 336px,#D4D4D4 377px,#F8F8F8 377px,#F8F8F8 384px,#506050 384px,#506050 385px,#E8D090 385px,#E8D090 390px,#80A0D0 390px,#80A0D0 391px,#D8D8D8 391px,#D8D8D8 438px,#B0B0B0 438px,#D8D8D8 465px,#E4E4E4 465px,#E4E4E4 473px,#BEBEBE 473px,#BEBEBE 488px,#98B4F8 488px,#98B4F8 504px,#E080F0 504px,#E080F0 519px,#F8A090 519px,#F8A090 534px,#F8C060 534px,#F8C060 538px)"></div>
</body></html>
